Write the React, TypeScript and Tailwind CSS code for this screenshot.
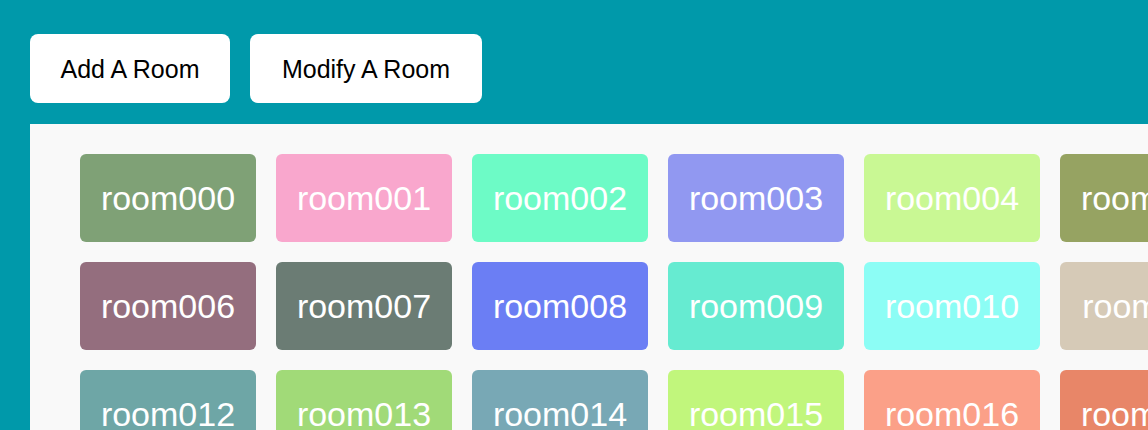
const rooms = [
  ['room000', '#7fa176'],
  ['room001', '#f9a7cd'],
  ['room002', '#6dfbc6'],
  ['room003', '#9198f1'],
  ['room004', '#c9f894'],
  ['room005', '#96a362'],
  ['room006', '#946e7e'],
  ['room007', '#6b7c74'],
  ['room008', '#6b7ef4'],
  ['room009', '#66ebd1'],
  ['room010', '#8cfdf5'],
  ['room011', '#d6cab7'],
  ['room012', '#6ea6a6'],
  ['room013', '#a1da78'],
  ['room014', '#78a8b5'],
  ['room015', '#c1f67c'],
  ['room016', '#fba088'],
  ['room017', '#e88668'],
];

const rows = [rooms.slice(0, 6), rooms.slice(6, 12), rooms.slice(12, 18)];

export default function App() {
  return (
    <div
      className="h-[430px] w-full overflow-hidden bg-[#0099aa]"
      style={{ fontFamily: '"Liberation Sans", Arial, sans-serif' }}
    >
      <div className="flex gap-5 px-[30px] pt-[34px]">
        <button className="h-[69px] w-[200px] rounded-lg bg-white pt-0.5 text-[25px] text-black">
          Add A Room
        </button>
        <button className="h-[69px] w-[232px] rounded-lg bg-white pt-0.5 text-[25px] text-black">
          Modify A Room
        </button>
      </div>
      <div className="ml-[30px] mt-[21px] flex flex-col gap-5 bg-[#f9f9f9] pl-[50px] pt-[30px] pb-10">
        {rows.map((row, i) => (
          <div key={i} className="flex gap-5">
            {row.map(([name, color]) => (
              <div
                key={name}
                className="flex h-[88px] w-[176px] shrink-0 items-center justify-center rounded-md text-[34px] text-white"
                style={{ backgroundColor: color }}
              >
                {name}
              </div>
            ))}
          </div>
        ))}
      </div>
    </div>
  );
}
